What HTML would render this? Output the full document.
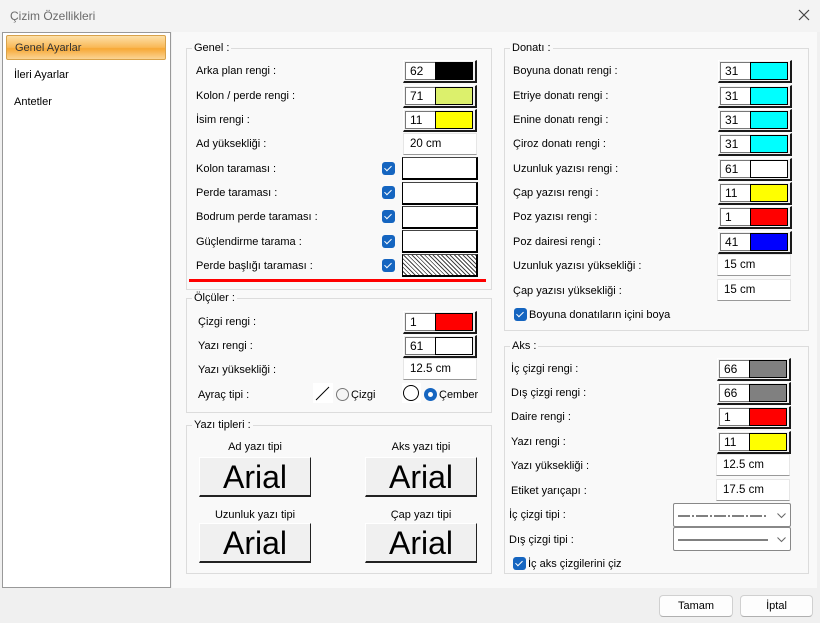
<!DOCTYPE html><html><head><meta charset="utf-8"><style>
*{box-sizing:border-box;margin:0;padding:0}
body{width:820px;height:623px;background:#f0f0f0;font-family:"Liberation Sans",sans-serif;font-size:11px;color:#000;position:relative;overflow:hidden}
.a{position:absolute}
.l{position:absolute;white-space:nowrap;line-height:14px}
.g{position:absolute;border:1px solid #dcdcdc}
.lg{position:absolute;background:#f9f9f9;padding:0 2px;line-height:12px;white-space:nowrap}
.cb{position:absolute;width:74px;height:23px;border-top:1px solid #fff;border-left:1px solid #fff;border-right:2px solid #1a1a1a;border-bottom:2px solid #1a1a1a;background:#f0f0f0}
.cb .n{position:absolute;left:1px;top:1px;width:31px;height:18px;border:1px solid #777;background:#fff;padding-left:4px;line-height:16px;font-size:12px}
.cb .s{position:absolute;left:31px;top:1px;width:38px;height:18px;border:1px solid #000}
.tf{position:absolute;width:74px;height:22px;background:#fff;border:1px solid #e6e6e6;border-bottom:1px solid #999;padding-left:6px;line-height:20px;font-size:11.5px}
.ck{position:absolute;width:13px;height:13px;background:#1565c0;border-radius:3px}
.ck:after{content:"";position:absolute;left:4px;top:2px;width:3px;height:6px;border:solid #fff;border-width:0 1px 1px 0;transform:rotate(45deg)}
.wb{position:absolute;width:76px;height:23px;background:#fff;border:1px solid #000;border-top-color:#444;border-bottom-width:2px;border-right-width:2px}
.fb{position:absolute;width:112px;height:40px;background:#f0f0f0;border-top:1px solid #fff;border-left:1px solid #fff;border-right:1px solid #222;border-bottom:2px solid #222;font-size:32px;text-align:center;line-height:38px}
.btn{position:absolute;height:22px;background:#fdfdfd;border:1px solid #d0d0d0;border-bottom-color:#b0b0b0;border-radius:4px;text-align:center;line-height:20px}
.dd{position:absolute;width:118px;height:24px;background:#fff;border:1px solid #888;border-radius:2px}
</style></head><body>
<div class="a" style="left:0;top:0;width:820px;height:32px;background:#f3f3f3"></div>
<div class="l" style="left:10px;top:9px;font-size:12px;color:#6b6b6b">Çizim Özellikleri</div>
<svg class="a" style="left:798px;top:9px" width="12" height="12"><path d="M1 1L11 11M11 1L1 11" stroke="#444" stroke-width="1.2"/></svg>
<div class="a" style="left:2px;top:32px;width:169px;height:556px;background:#fff;border:1px solid #999"></div>
<div class="a" style="left:6px;top:35px;width:160px;height:25px;border:1px solid #d8a24a;border-radius:2px;background:linear-gradient(#fde0a8,#f9b856 50%,#f7a835 55%,#fbd494)"></div>
<div class="l" style="left:15px;top:41px;color:#333">Genel Ayarlar</div>
<div class="l" style="left:14px;top:68px">İleri Ayarlar</div>
<div class="l" style="left:14px;top:95px">Antetler</div>
<div class="a" style="left:172px;top:32px;width:645px;height:556px;background:#f9f9f9"></div>

<div class="g" style="left:186px;top:48px;width:306px;height:242px"></div>
<div class="lg" style="left:192px;top:42px">Genel :</div>
<div class="l" style="left:196px;top:64px">Arka plan rengi :</div>
<div class="l" style="left:196px;top:89px">Kolon / perde rengi :</div>
<div class="l" style="left:196px;top:113px">İsim rengi :</div>
<div class="l" style="left:196px;top:137px">Ad yüksekliği :</div>
<div class="l" style="left:196px;top:162px">Kolon taraması :</div>
<div class="l" style="left:196px;top:186px">Perde taraması :</div>
<div class="l" style="left:196px;top:210px">Bodrum perde taraması :</div>
<div class="l" style="left:196px;top:235px">Güçlendirme tarama :</div>
<div class="l" style="left:196px;top:259px">Perde başlığı taraması :</div>
<div class="cb" style="left:403px;top:60px"><div class="n">62</div><div class="s" style="background:#000"></div></div>
<div class="cb" style="left:403px;top:85px"><div class="n">71</div><div class="s" style="background:#dcf06c"></div></div>
<div class="cb" style="left:403px;top:109px"><div class="n">11</div><div class="s" style="background:#ff0"></div></div>
<div class="tf" style="left:403px;top:133px">20 cm</div>
<div class="ck" style="left:382px;top:162px"></div>
<div class="ck" style="left:382px;top:186px"></div>
<div class="ck" style="left:382px;top:210px"></div>
<div class="ck" style="left:382px;top:235px"></div>
<div class="ck" style="left:382px;top:259px"></div>
<div class="wb" style="left:402px;top:157px"></div>
<div class="wb" style="left:402px;top:182px"></div>
<div class="wb" style="left:402px;top:206px"></div>
<div class="wb" style="left:402px;top:230px"></div>
<div class="wb" style="left:402px;top:254px;background:repeating-linear-gradient(45deg,#fff 0 2px,#444 2px 3px)"></div>
<div class="a" style="left:189px;top:279px;width:297px;height:3px;background:#f00"></div>

<div class="g" style="left:186px;top:298px;width:306px;height:115px"></div>
<div class="lg" style="left:192px;top:292px">Ölçüler :</div>
<div class="l" style="left:198px;top:315px">Çizgi rengi :</div>
<div class="l" style="left:198px;top:339px">Yazı rengi :</div>
<div class="l" style="left:198px;top:363px">Yazı yüksekliği :</div>
<div class="l" style="left:198px;top:388px">Ayraç tipi :</div>
<div class="cb" style="left:403px;top:311px"><div class="n">1</div><div class="s" style="background:#f00"></div></div>
<div class="cb" style="left:403px;top:335px"><div class="n">61</div><div class="s" style="background:#fff"></div></div>
<div class="tf" style="left:403px;top:358px">12.5 cm</div>
<div class="a" style="left:313px;top:383px;width:20px;height:20px;background:#fff"><svg width="20" height="20"><line x1="3" y1="17" x2="16" y2="4" stroke="#000"/></svg></div>
<div class="a" style="left:336px;top:388px;width:13px;height:13px;border:1px solid #777;border-radius:50%;background:#f5f5f5"></div>
<div class="l" style="left:351px;top:388px">Çizgi</div>
<div class="a" style="left:402px;top:383px;width:19px;height:20px;background:#fff"><svg width="19" height="20"><circle cx="9" cy="10" r="7.5" fill="none" stroke="#000"/></svg></div>
<div class="a" style="left:424px;top:388px;width:13px;height:13px;border-radius:50%;background:#1565c0"><div class="a" style="left:4px;top:4px;width:5px;height:5px;border-radius:50%;background:#fff"></div></div>
<div class="l" style="left:439px;top:388px">Çember</div>

<div class="g" style="left:186px;top:425px;width:306px;height:149px"></div>
<div class="lg" style="left:192px;top:419px">Yazı tipleri :</div>
<div class="l" style="left:199px;top:440px;width:112px;text-align:center">Ad yazı tipi</div>
<div class="l" style="left:365px;top:440px;width:112px;text-align:center">Aks yazı tipi</div>
<div class="l" style="left:199px;top:508px;width:112px;text-align:center">Uzunluk yazı tipi</div>
<div class="l" style="left:365px;top:508px;width:112px;text-align:center">Çap yazı tipi</div>
<div class="fb" style="left:199px;top:457px">Arial</div>
<div class="fb" style="left:365px;top:457px">Arial</div>
<div class="fb" style="left:199px;top:523px">Arial</div>
<div class="fb" style="left:365px;top:523px">Arial</div>

<div class="g" style="left:504px;top:48px;width:305px;height:283px"></div>
<div class="lg" style="left:510px;top:42px">Donatı :</div>
<div class="l" style="left:513px;top:64px">Boyuna donatı rengi :</div>
<div class="l" style="left:513px;top:89px">Etriye donatı rengi :</div>
<div class="l" style="left:513px;top:113px">Enine donatı rengi :</div>
<div class="l" style="left:513px;top:137px">Çiroz donatı rengi :</div>
<div class="l" style="left:513px;top:162px">Uzunluk yazısı rengi :</div>
<div class="l" style="left:513px;top:186px">Çap yazısı rengi :</div>
<div class="l" style="left:513px;top:210px">Poz yazısı rengi :</div>
<div class="l" style="left:513px;top:235px">Poz dairesi rengi :</div>
<div class="l" style="left:513px;top:259px">Uzunluk yazısı yüksekliği :</div>
<div class="l" style="left:513px;top:284px">Çap yazısı yüksekliği :</div>
<div class="cb" style="left:718px;top:60px"><div class="n">31</div><div class="s" style="background:#0ff"></div></div>
<div class="cb" style="left:718px;top:85px"><div class="n">31</div><div class="s" style="background:#0ff"></div></div>
<div class="cb" style="left:718px;top:109px"><div class="n">31</div><div class="s" style="background:#0ff"></div></div>
<div class="cb" style="left:718px;top:133px"><div class="n">31</div><div class="s" style="background:#0ff"></div></div>
<div class="cb" style="left:718px;top:158px"><div class="n">61</div><div class="s" style="background:#fff"></div></div>
<div class="cb" style="left:718px;top:182px"><div class="n">11</div><div class="s" style="background:#ff0"></div></div>
<div class="cb" style="left:718px;top:206px"><div class="n">1</div><div class="s" style="background:#f00"></div></div>
<div class="cb" style="left:718px;top:231px"><div class="n">41</div><div class="s" style="background:#00f"></div></div>
<div class="tf" style="left:717px;top:254px">15 cm</div>
<div class="tf" style="left:717px;top:279px">15 cm</div>
<div class="ck" style="left:514px;top:308px"></div>
<div class="l" style="left:529px;top:308px">Boyuna donatıların içini boya</div>

<div class="g" style="left:504px;top:346px;width:305px;height:228px"></div>
<div class="lg" style="left:510px;top:340px">Aks :</div>
<div class="l" style="left:511px;top:362px">İç çizgi rengi :</div>
<div class="l" style="left:511px;top:386px">Dış çizgi rengi :</div>
<div class="l" style="left:511px;top:410px">Daire rengi :</div>
<div class="l" style="left:511px;top:435px">Yazı rengi :</div>
<div class="l" style="left:511px;top:459px">Yazı yüksekliği :</div>
<div class="l" style="left:511px;top:484px">Etiket yarıçapı :</div>
<div class="l" style="left:509px;top:508px">İç çizgi tipi :</div>
<div class="l" style="left:509px;top:533px">Dış çizgi tipi :</div>
<div class="cb" style="left:717px;top:358px"><div class="n">66</div><div class="s" style="background:#808080"></div></div>
<div class="cb" style="left:717px;top:382px"><div class="n">66</div><div class="s" style="background:#808080"></div></div>
<div class="cb" style="left:717px;top:406px"><div class="n">1</div><div class="s" style="background:#f00"></div></div>
<div class="cb" style="left:717px;top:431px"><div class="n">11</div><div class="s" style="background:#ff0"></div></div>
<div class="tf" style="left:716px;top:454px">12.5 cm</div>
<div class="tf" style="left:716px;top:479px">17.5 cm</div>
<div class="dd" style="left:673px;top:503px"><svg class="a" style="left:4px;top:11px" width="90" height="2"><line x1="0" y1="1" x2="90" y2="1" stroke="#000" stroke-dasharray="12 2 2 2"/></svg><svg class="a" style="left:103px;top:9px" width="9" height="6"><path d="M0.5 0.5 L4.5 4.5 L8.5 0.5" fill="none" stroke="#666"/></svg></div>
<div class="dd" style="left:673px;top:527px"><svg class="a" style="left:4px;top:11px" width="90" height="2"><line x1="0" y1="1" x2="90" y2="1" stroke="#000"/></svg><svg class="a" style="left:103px;top:9px" width="9" height="6"><path d="M0.5 0.5 L4.5 4.5 L8.5 0.5" fill="none" stroke="#666"/></svg></div>
<div class="ck" style="left:513px;top:557px"></div>
<div class="l" style="left:528px;top:557px">İç aks çizgilerini çiz</div>

<div class="btn" style="left:659px;top:595px;width:74px">Tamam</div>
<div class="btn" style="left:740px;top:595px;width:73px">İptal</div>
</body></html>
